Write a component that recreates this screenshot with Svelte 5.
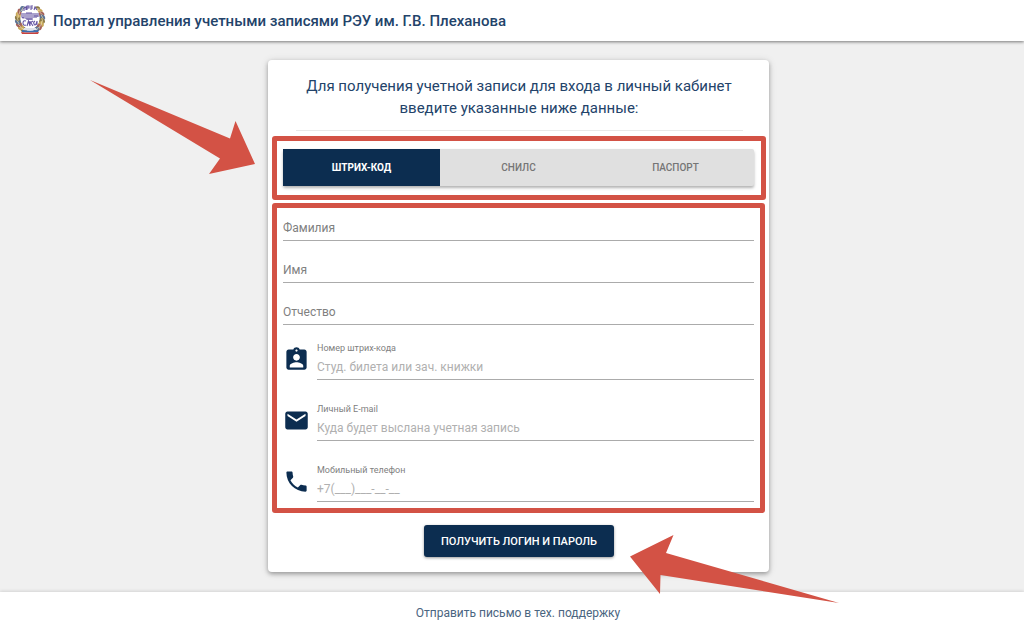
<script>
	const tabs = ['Штрих-код', 'СНИЛС', 'Паспорт'];
	let active = $state(0);

	const names = [
		{ id: 'surname', label: 'Фамилия' },
		{ id: 'name', label: 'Имя' },
		{ id: 'patronymic', label: 'Отчество' }
	];

	const contacts = [
		{
			id: 'barcode',
			type: 'text',
			label: 'Номер штрих-кода',
			placeholder: 'Студ. билета или зач. книжки',
			icon: 'M19 3h-4.2C14.4 1.8 13.3 1 12 1s-2.4.8-2.8 2H5c-1.1 0-2 .9-2 2v14c0 1.1.9 2 2 2h14c1.1 0 2-.9 2-2V5c0-1.1-.9-2-2-2zm-7 0c.55 0 1 .45 1 1s-.45 1-1 1-1-.45-1-1 .45-1 1-1zm0 4c1.66 0 3 1.34 3 3s-1.34 3-3 3-3-1.34-3-3 1.34-3 3-3zm6 12H6v-1.4c0-2 4-3.1 6-3.1s6 1.1 6 3.1V19z'
		},
		{
			id: 'email',
			type: 'email',
			label: 'Личный E-mail',
			placeholder: 'Куда будет выслана учетная запись',
			icon: 'M20 4H4c-1.1 0-2 .9-2 2v12c0 1.1.9 2 2 2h16c1.1 0 2-.9 2-2V6c0-1.1-.9-2-2-2zm0 4l-8 5-8-5V6l8 5 8-5v2z'
		},
		{
			id: 'phone',
			type: 'tel',
			label: 'Мобильный телефон',
			placeholder: '+7(___)___-__-__',
			icon: 'M6.62 10.79c1.44 2.83 3.76 5.14 6.59 6.59l2.2-2.2c.27-.27.67-.36 1.02-.24 1.12.37 2.33.57 3.57.57.55 0 1 .45 1 1V20c0 .55-.45 1-1 1-9.39 0-17-7.61-17-17 0-.55.45-1 1-1h3.5c.55 0 1 .45 1 1 0 1.25.2 2.45.57 3.57.11.35.03.74-.25 1.02l-2.2 2.2z'
		}
	];

	// leaves of the wreath, from the ribbon up to the crown
	const leaves = [-148, -132, -116, -100, -84, -68, -52, -36, 36, 52, 68, 84, 100, 116, 132, 148];
	const colours = ['#8c7a45', '#c9a85a', '#a3605a', '#5b7396'];
</script>

<div class="page">
	<header>
		<svg class="logo" viewBox="0 0 32 32" aria-hidden="true">
			{#each leaves as angle, i}
				<g transform="rotate({angle} 16 16)">
					<path d="M12.5 4.500Q14 .2 17 .8Q20 2.500 18.800 6Q15 8 12.500 4.500z" fill={colours[i % 4]} />
					<path d="M13 4.500l5-2" stroke="#e8dcae" stroke-width=".7" />
				</g>
			{/each}
			<ellipse cx="16" cy="14.5" rx="9.5" ry="11.5" fill="#fff" />
			<g fill="none" stroke="#6555a3" stroke-width="1.1">
				<path d="M10 8V5l2-1v3M13 7V3h2v2h-2M17 7V3h2M17 5h2M20 7l1-3 2 3" />
				<path d="M8 10v4q0 1 2 1v-5M12 16v-6M14 10v7M16 10v7M18 10v7M12 10h6M12 16h6M20 10v5M22 10v5M24 10v4M20 13h4" />
				<path d="M12 18q-3-1-3 2t3 2M13 23l1.500-5 1.500 5M16 18v5M16 20l3-2M17 20l2 3M21 18q-2 1-1 3t2 0 1-3M23 18v4" />
			</g>
			<path d="M10 25h12l1 2H9z" fill="#dfe3ea" />
			<path d="M8 27q8 1.5 16 0v2q-8 1-16 0z" fill="#3b6db0" />
			<path d="M7 29q9 1 18 0l-1 2H8z" fill="#c8413c" />
		</svg>
		<h1>Портал управления учетными записями РЭУ им. Г.В. Плеханова</h1>
	</header>

	<main>
		<form class="card" onsubmit={(e) => e.preventDefault()}>
			<h2>Для получения учетной записи для входа в личный кабинет введите указанные ниже данные:</h2>
			<hr />

			<section class="frame">
				<div class="tabs">
					{#each tabs as tab, i}
						<button type="button" class:active={active === i} onclick={() => (active = i)}>{tab}</button>
					{/each}
				</div>
			</section>

			<section class="frame fields">
				{#each names as field}
					<input class="line name" id={field.id} type="text" placeholder={field.label} aria-label={field.label} />
				{/each}
				{#each contacts as field}
					<div class="contact">
						<svg viewBox="0 0 24 24" aria-hidden="true"><path d={field.icon} /></svg>
						<div class="control">
							<label for={field.id}>{field.label}</label>
							<input class="line" id={field.id} type={field.type} placeholder={field.placeholder} />
						</div>
					</div>
				{/each}
			</section>

			<button class="submit" type="submit">Получить логин и пароль</button>

			<svg class="arrow to-tabs" viewBox="0 0 166 94" aria-hidden="true">
				<path d="M0 0L140 58.5 145.5 41 165 84 119 94 130 78.5z" />
			</svg>
			<svg class="arrow to-submit" viewBox="0 0 210 60" aria-hidden="true">
				<path d="M0 21.5L43.5 0 36 18 209 68 30.5 40 30 59z" />
			</svg>
		</form>
	</main>

	<footer>
		<a href="#support">Отправить письмо в тех. поддержку</a>
	</footer>
</div>

<style>
	:global(body) {
		margin: 0;
	}

	.page {
		min-height: 100vh;
		display: flex;
		flex-direction: column;
		background: #f0f0f0;
		color: #23436a;
		font-family: Roboto, "Liberation Sans", sans-serif;
	}

	header {
		display: flex;
		align-items: center;
		gap: 7px;
		height: 41px;
		padding: 0 14px;
		background: #fff;
		box-shadow: 0 1px 3px rgba(0, 0, 0, .5);
	}

	.logo {
		width: 32px;
		height: 32px;
		margin-bottom: 3px;
	}

	h1 {
		margin: 0;
		font-size: 15px;
		font-weight: 500;
	}

	main {
		flex: 1;
		display: flex;
		justify-content: center;
		align-items: flex-start;
		padding: 19px 16px 19px 29px;
	}

	.card {
		position: relative;
		display: flex;
		flex-direction: column;
		box-sizing: border-box;
		width: 100%;
		max-width: 501px;
		padding: 15px 3px 15px 4px;
		background: #fff;
		border-radius: 4px;
		box-shadow: 0 2px 4px rgba(0, 0, 0, .3), 0 1px 8px rgba(0, 0, 0, .12);
	}

	h2 {
		margin: 0 30px 11px;
		font-size: 15px;
		font-weight: 400;
		line-height: 22px;
		text-align: center;
	}

	hr {
		width: 447px;
		max-width: 100%;
		margin: 0 auto 5px;
		border: 0;
		border-top: 1px solid #e8e8e8;
	}

	.frame {
		border: 5px solid #d35245;
		border-radius: 3px;
		padding: 8px 7px 9px 6px;
	}

	.tabs {
		display: flex;
		background: #e0e0e0;
		border-radius: 2px;
		box-shadow: 0 2px 3px rgba(0, 0, 0, .3);
	}

	button {
		border: 0;
		font-family: inherit;
		font-weight: 500;
		text-transform: uppercase;
		cursor: pointer;
	}

	.tabs button {
		flex: 1;
		height: 37px;
		padding: 0;
		background: transparent;
		color: #757575;
		font-size: 10px;
	}

	.tabs .active {
		background: #0c2d50;
		color: #fff;
		font-weight: 700;
	}

	.fields {
		margin: 3px 1px 0 0;
		padding: 7px 6px 6px;
	}

	.line {
		display: block;
		box-sizing: border-box;
		width: 100%;
		height: 26px;
		padding: 0;
		border: 0;
		border-bottom: 1px solid #ababab;
		outline: 0;
		background: none;
		color: #333;
		font-family: inherit;
		font-size: 12px;
	}

	.line::placeholder {
		color: #b0b0b0;
		opacity: 1;
	}

	.name {
		margin-bottom: 16px;
	}

	.name::placeholder {
		color: #808080;
	}

	.contact {
		display: flex;
		gap: 7px;
		margin-bottom: 23px;
	}

	.contact:first-of-type {
		margin-top: 17px;
	}

	.contact:last-child {
		margin-bottom: 0;
	}

	.contact svg {
		width: 27px;
		height: 27px;
		margin-top: 4px;
		fill: #0c2d50;
	}

	.control {
		flex: 1;
	}

	label {
		display: block;
		color: #808080;
		font-size: 9px;
		line-height: 12px;
	}

	.submit {
		align-self: center;
		height: 32px;
		margin-top: 12px;
		padding: 0 17px;
		border-radius: 3px;
		background: #0c2d50;
		color: #fff;
		font-size: 11px;
		box-shadow: 0 1px 3px rgba(0, 0, 0, .4);
	}

	.arrow {
		position: absolute;
		overflow: visible;
		fill: #d35245;
		pointer-events: none;
	}

	.to-tabs {
		top: 20px;
		right: 513px;
		width: 166px;
		height: 94px;
	}

	.to-submit {
		top: 475px;
		left: 362px;
		width: 210px;
		height: 60px;
	}

	footer {
		display: flex;
		align-items: center;
		justify-content: center;
		padding-left: 12px;
		height: 41px;
		background: #fff;
		box-shadow: 0 -1px 3px rgba(0, 0, 0, .12);
	}

	footer a {
		color: #4a6580;
		font-size: 12px;
		text-decoration: none;
	}
</style>
